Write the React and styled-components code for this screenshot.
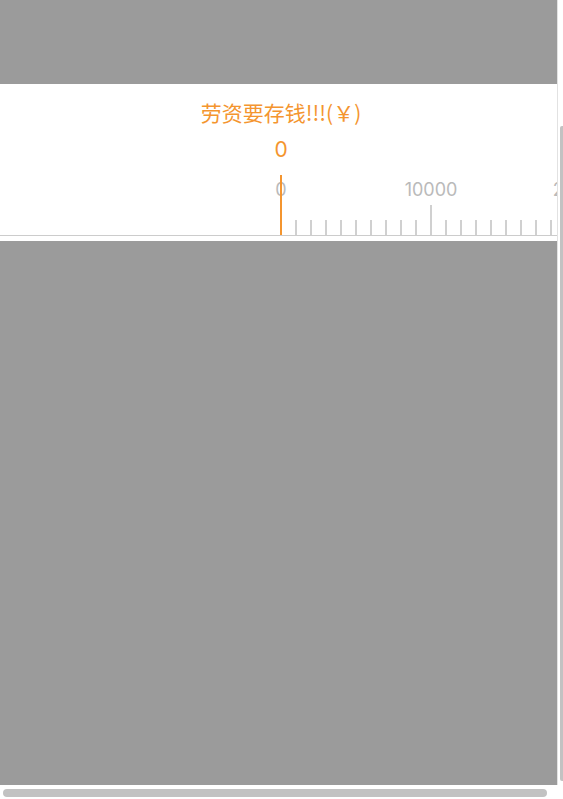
import React from "react";
import styled, { createGlobalStyle } from "styled-components";

const GlobalStyle = createGlobalStyle`
  html, body {
    margin: 0;
    padding: 0;
    background: #ffffff;
    font-family: Inter, "Noto Sans CJK SC", sans-serif;
  }
`;

const ORANGE = "#f4952f";

const Screen = styled.div`
  width: 563px;
  height: 799px;
  display: grid;
  grid-template-columns: 557px 1px 5px;
  grid-template-rows: 785px 14px;
  overflow: hidden;
  background: #ffffff;
`;

const Viewport = styled.div`
  background: #9b9b9b;
  overflow: hidden;
`;

const Inner = styled.div`
  width: 562px;
  padding-top: 84px;
`;

const Divider = styled.div`
  background: #e2e2e2;
`;

const VTrack = styled.div`
  position: relative;
`;

const VThumb = styled.div`
  position: absolute;
  top: 126px;
  bottom: 4px;
  right: 0;
  width: 3px;
  border-radius: 2px 0 0 2px;
  background: #c2c2c2;
`;

const HTrack = styled.div`
  grid-column: 1 / 4;
  padding: 4px 0 2px 3px;
`;

const HThumb = styled.div`
  width: 544px;
  height: 8px;
  border-radius: 4px;
  background: #c2c2c2;
`;

const Panel = styled.div`
  background: #ffffff;
  display: flex;
  flex-direction: column;
  align-items: center;
  padding: 15px 0 5px;
`;

const Title = styled.div`
  font-family: "Noto Sans CJK SC", sans-serif;
  font-size: 21px;
  line-height: 26px;
  color: ${ORANGE};
`;

const Value = styled.div`
  margin-top: 11px;
  font-size: 21px;
  line-height: 28px;
  color: ${ORANGE};
`;

const Ruler = styled.div`
  position: relative;
  align-self: stretch;
  margin-top: 11px;
  height: 60px;
  border-bottom: 1px solid #cccccc;
  overflow: hidden;
`;

const TickRow = styled.div`
  display: flex;
  align-items: flex-end;
  gap: 13px;
  height: 100%;
  padding-left: 280px;
`;

const Tick = styled.div`
  position: relative;
  flex: none;
  width: 2px;
  height: ${(p) => (p.$major ? 30 : 15)}px;
  background: #d0d0d0;
`;

const TickLabel = styled.span`
  position: absolute;
  bottom: 34px;
  left: 1px;
  transform: translateX(-50%);
  font-size: 18px;
  line-height: 22px;
  color: #bababa;
  white-space: nowrap;
`;

const Pointer = styled.div`
  position: absolute;
  left: 280px;
  top: 0;
  width: 2px;
  height: 100%;
  background: ${ORANGE};
`;

const ticks = Array.from({ length: 26 }, (_, i) => i);

export default function App() {
  return (
    <Screen>
      <GlobalStyle />
      <Viewport>
        <Inner>
          <Panel>
            <Title>劳资要存钱!!!(￥)</Title>
            <Value>0</Value>
            <Ruler>
              <TickRow>
                {ticks.map((i) => (
                  <Tick key={i} $major={i % 10 === 0}>
                    {i % 10 === 0 && <TickLabel>{i * 1000}</TickLabel>}
                  </Tick>
                ))}
              </TickRow>
              <Pointer />
            </Ruler>
          </Panel>
        </Inner>
      </Viewport>
      <Divider />
      <VTrack>
        <VThumb />
      </VTrack>
      <HTrack>
        <HThumb />
      </HTrack>
    </Screen>
  );
}
